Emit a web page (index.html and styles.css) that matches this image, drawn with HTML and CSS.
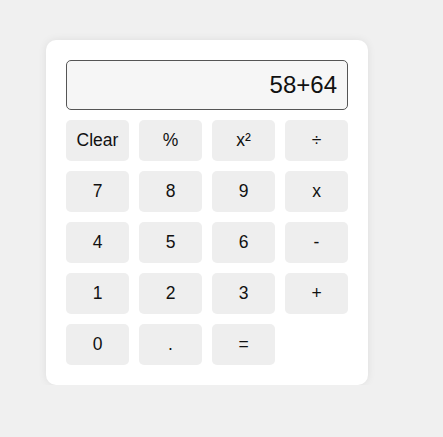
FILE: index.html
```html
<!DOCTYPE html>
<html>
<head>
<meta charset="utf-8">
<link rel="stylesheet" href="styles.css">
</head>
<body>
<div class="calc">
  <div class="display">58+64</div>
  <div class="keys">
    <button class="key">Clear</button>
    <button class="key">%</button>
    <button class="key">x²</button>
    <button class="key">÷</button>
    <button class="key">7</button>
    <button class="key">8</button>
    <button class="key">9</button>
    <button class="key">x</button>
    <button class="key">4</button>
    <button class="key">5</button>
    <button class="key">6</button>
    <button class="key">-</button>
    <button class="key">1</button>
    <button class="key">2</button>
    <button class="key">3</button>
    <button class="key">+</button>
    <button class="key">0</button>
    <button class="key">.</button>
    <button class="key">=</button>
  </div>
</div>
</body>
</html>
```
FILE: styles.css
```css
html, body {
  margin: 0;
  padding: 0;
  background: #f0f0f0;
  font-family: "Liberation Sans", Arial, sans-serif;
}
body {
  padding: 40px 0 0 46px;
}
.calc {
  width: 282px;
  padding: 20px;
  background: #fff;
  border-radius: 10px;
  box-shadow: 0 0 8px rgba(0,0,0,0.08);
}
.display {
  box-sizing: border-box;
  height: 50px;
  border: 1px solid #555;
  border-radius: 5px;
  background: #f6f6f6;
  font-size: 24px;
  color: #111;
  text-align: right;
  line-height: 48px;
  padding-right: 10px;
  margin-bottom: 10px;
}
.keys {
  display: grid;
  grid-template-columns: repeat(4, 63px);
  grid-auto-rows: 41px;
  gap: 10px;
}
.key {
  border: none;
  border-radius: 5px;
  background: #eeeeee;
  font-family: "Liberation Sans", Arial, sans-serif;
  font-size: 17.5px;
  color: #111;
  padding: 0;
}
```
